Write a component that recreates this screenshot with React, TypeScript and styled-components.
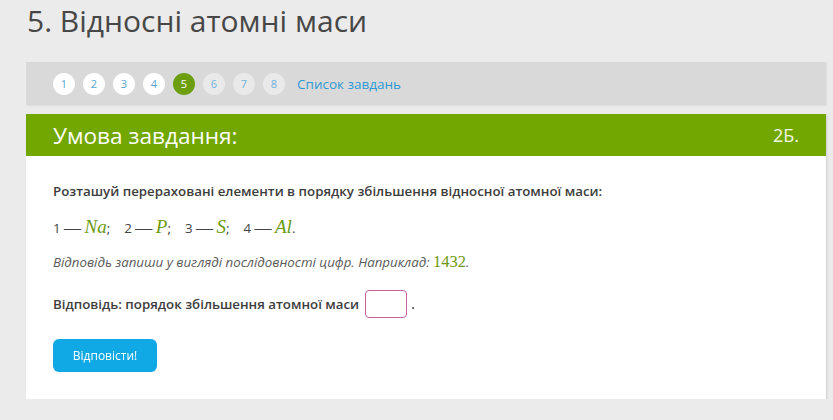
import styled, { createGlobalStyle } from 'styled-components';

const GlobalStyle = createGlobalStyle`
  html, body {
    margin: 0;
    padding: 0;
    background: #ebebeb;
    font-family: 'Open Sans', 'Noto Sans', sans-serif;
    color: #333;
  }
`;

const Page = styled.div`
  padding: 0 7px 0 26px;
`;

const Title = styled.h1`
  margin: 0;
  padding: 0 0 0 1px;
  height: 62px;
  font-size: 30px;
  font-weight: 400;
  color: #474747;
  line-height: 41px;
`;

const NavBar = styled.nav`
  display: flex;
  align-items: center;
  gap: 8px;
  height: 43px;
  padding: 0 0 0 27px;
  background: #d9d9d9;
  box-shadow: 1px 1px 1px rgba(0, 0, 0, 0.05);
`;

const Step = styled.span<{ $state: 'done' | 'active' | 'todo' }>`
  display: flex;
  align-items: center;
  justify-content: center;
  width: 22px;
  height: 22px;
  border-radius: 50%;
  font-size: 11px;
  background: ${({ $state }) =>
    $state === 'active' ? '#6c9e0f' : $state === 'done' ? '#ffffff' : '#e9e9e9'};
  color: ${({ $state }) =>
    $state === 'active' ? '#ffffff' : $state === 'done' ? '#5aa4cf' : '#6fb2dc'};
`;

const TaskListLink = styled.a`
  margin-left: 4px;
  font-size: 13.5px;
  color: #2c9ad6;
  text-decoration: none;
`;

const Card = styled.section`
  margin-top: 9px;
  background: #fff;
  box-shadow: 1px 1px 2px rgba(0, 0, 0, 0.12);
`;

const CardHeader = styled.header`
  display: flex;
  align-items: center;
  justify-content: space-between;
  height: 42px;
  padding: 0 27px;
  background: #72a600;
  color: #fff;
`;

const HeaderTitle = styled.h2`
  margin: 0;
  font-size: 22.6px;
  font-weight: 400;
`;

const Points = styled.span`
  font-size: 18px;
  color: #f2f7e2;
`;

const CardBody = styled.div`
  padding: 26px 27px 27px;
`;

const Question = styled.p`
  margin: 0 0 16px;
  font-size: 13.3px;
  font-weight: 600;
  color: #3d3d3d;
`;

const Elements = styled.p`
  margin: 0 0 14px;
  font-size: 13.3px;
  color: #444;
`;

const Item = styled.span`
  margin-right: 14px;
`;

const MathText = styled.span`
  font-family: 'Liberation Serif', 'DejaVu Serif', serif;
  font-size: 17px;
`;

const Symbol = styled.i`
  font-family: 'Liberation Serif', 'DejaVu Serif', serif;
  font-size: 19px;
  color: #6c9a10;
`;

const Hint = styled.p`
  margin: 0 0 18px;
  font-size: 13.3px;
  font-style: italic;
  color: #5a5a5a;
`;

const Example = styled.span`
  font-family: 'Liberation Serif', 'DejaVu Serif', serif;
  font-style: normal;
  font-size: 16.5px;
  color: #6c9a10;
`;

const AnswerRow = styled.div`
  display: flex;
  align-items: center;
  gap: 4px;
  margin-bottom: 21px;
  font-size: 13.3px;
  font-weight: 600;
  color: #3d3d3d;
`;

const AnswerInput = styled.input`
  box-sizing: border-box;
  width: 42px;
  height: 28px;
  margin-left: 2px;
  border: 1px solid #c45f9b;
  border-radius: 4px;
  outline: none;
  padding: 0 3px;
`;

const SubmitButton = styled.button`
  width: 104px;
  height: 33px;
  border: none;
  border-radius: 6px;
  background: #10a9e6;
  color: #fff;
  font-family: 'Open Sans', sans-serif;
  font-size: 12px;
`;

const steps = [1, 2, 3, 4, 5, 6, 7, 8];
const elements: [number, string, string][] = [
  [1, 'Na', ';'],
  [2, 'P', ';'],
  [3, 'S', ';'],
  [4, 'Al', '.'],
];

export default function App() {
  return (
    <Page>
      <GlobalStyle />
      <Title>5. Відносні атомні маси</Title>
      <NavBar>
        {steps.map(n => (
          <Step key={n} $state={n < 5 ? 'done' : n === 5 ? 'active' : 'todo'}>{n}</Step>
        ))}
        <TaskListLink href="#">Список завдань</TaskListLink>
      </NavBar>
      <Card>
        <CardHeader>
          <HeaderTitle>Умова завдання:</HeaderTitle>
          <Points>2Б.</Points>
        </CardHeader>
        <CardBody>
          <Question>Розташуй перераховані елементи в порядку збільшення відносної атомної маси:</Question>
          <Elements>
            {elements.map(([n, sym, end]) => (
              <Item key={n}>
                {n} <MathText>—</MathText> <Symbol>{sym}</Symbol>{end}
              </Item>
            ))}
          </Elements>
          <Hint>
            Відповідь запиши у вигляді послідовності цифр. Наприклад: <Example>1432</Example>.
          </Hint>
          <AnswerRow>
            Відповідь: порядок збільшення атомної маси
            <AnswerInput autoFocus />
            <span>.</span>
          </AnswerRow>
          <SubmitButton>Відповісти!</SubmitButton>
        </CardBody>
      </Card>
    </Page>
  );
}
